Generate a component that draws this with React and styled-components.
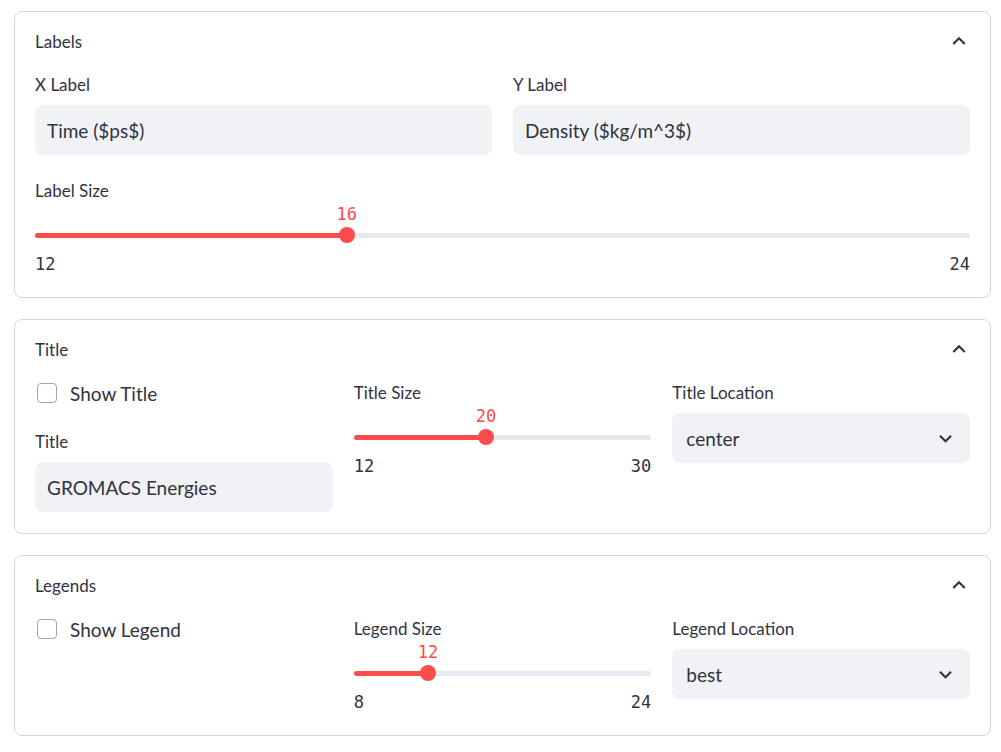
import React from 'react';
import styled, { createGlobalStyle } from 'styled-components';

const GlobalStyle = createGlobalStyle`
  * { box-sizing: border-box; }
  body {
    margin: 0;
    background: #ffffff;
    font-family: Lato, "Noto Sans", sans-serif;
    color: #31333f;
  }
`;

const Page = styled.div`
  display: flex;
  flex-direction: column;
  gap: 21px;
  padding: 11px 10px 0 14px;
`;

const Expander = styled.section`
  border: 1px solid #d6d6d9;
  border-radius: 8px;
  background: #fff;
`;

const ExpanderHeader = styled.div`
  height: 58px;
  padding: 0 18px 0 20px;
  display: flex;
  align-items: center;
  justify-content: space-between;
  font-size: 17px;
`;

const ExpanderBody = styled.div`
  padding: 3px 20px 21px;
  display: flex;
  flex-direction: column;
  gap: 24px;
`;

const Grid = styled.div`
  display: grid;
  grid-template-columns: repeat(${p => p.$cols}, 1fr);
  column-gap: 21px;
  align-items: start;
`;

const Field = styled.div`
  display: flex;
  flex-direction: column;
`;

const Stack = styled.div`
  display: flex;
  flex-direction: column;
  gap: 25px;
`;

const Label = styled.label`
  font-size: 17px;
  line-height: 24px;
  margin-bottom: ${p => (p.$tight ? '1px' : '8px')};
`;

const TextBox = styled.input`
  height: 50px;
  width: 100%;
  border: none;
  outline: none;
  border-radius: 8px;
  background: #f0f2f6;
  padding: 0 12px;
  font-family: inherit;
  font-size: 19px;
  color: #31333f;
`;

const SelectBox = styled.div`
  height: 50px;
  border-radius: 8px;
  background: #f0f2f6;
  padding: 0 12px 0 14px;
  display: flex;
  align-items: center;
  justify-content: space-between;
  font-size: 19px;
`;

const CheckRow = styled.div`
  height: 24px;
  display: flex;
  align-items: center;
  gap: 13px;
  padding-left: 2px;
  font-size: 19px;
`;

const Box = styled.span`
  width: 20px;
  height: 20px;
  border: 1px solid #a3a4ab;
  border-radius: 4px;
  background: #fff;
`;

const SliderBox = styled.div`
  display: flex;
  flex-direction: column;
  font-family: "DejaVu Sans Mono", "Liberation Mono", monospace;
  font-size: 17px;
`;

const ValueRow = styled.div`
  position: relative;
  height: 20px;
`;

const ValueText = styled.span`
  position: absolute;
  top: 0;
  line-height: 20px;
  transform: translateX(-50%);
  color: #ff4b4b;
`;

const TrackRow = styled.div`
  height: 22px;
  display: flex;
  align-items: center;
`;

const Track = styled.div`
  position: relative;
  width: 100%;
  height: 5px;
  border-radius: 3px;
  background: #e6e9ef;
`;

const Fill = styled.div`
  position: absolute;
  left: 0;
  top: 0;
  bottom: 0;
  border-radius: 3px;
  background: #ff4b4b;
`;

const Thumb = styled.div`
  position: absolute;
  top: 50%;
  width: 16px;
  height: 16px;
  border-radius: 50%;
  background: #ff4b4b;
  transform: translate(-50%, -50%);
`;

const Ticks = styled.div`
  margin-top: 6px;
  height: 24px;
  line-height: 24px;
  display: flex;
  justify-content: space-between;
`;

const Chevron = ({ up, size = 25 }) => (
  <svg width={size} height={size} viewBox="0 0 24 24" fill="#31333f">
    {up
      ? <path d="M12 8l-6 6 1.41 1.41L12 10.83l4.59 4.58L18 14z" />
      : <path d="M16.59 8.59L12 13.17 7.41 8.59 6 10l6 6 6-6z" />}
  </svg>
);

const Panel = ({ title, children }) => (
  <Expander>
    <ExpanderHeader>
      <span>{title}</span>
      <Chevron up size={26} />
    </ExpanderHeader>
    <ExpanderBody>{children}</ExpanderBody>
  </Expander>
);

const Slider = ({ min, max, value }) => {
  const pct = ((value - min) / (max - min)) * 100;
  return (
    <SliderBox>
      <ValueRow>
        <ValueText style={{ left: `${pct}%` }}>{value}</ValueText>
      </ValueRow>
      <TrackRow>
        <Track>
          <Fill style={{ width: `${pct}%` }} />
          <Thumb style={{ left: `${pct}%` }} />
        </Track>
      </TrackRow>
      <Ticks>
        <span>{min}</span>
        <span>{max}</span>
      </Ticks>
    </SliderBox>
  );
};

const TextField = ({ label, value }) => (
  <Field>
    <Label>{label}</Label>
    <TextBox readOnly defaultValue={value} />
  </Field>
);

const SliderField = ({ label, ...rest }) => (
  <Field>
    <Label $tight>{label}</Label>
    <Slider {...rest} />
  </Field>
);

const SelectField = ({ label, value }) => (
  <Field>
    <Label>{label}</Label>
    <SelectBox>
      <span>{value}</span>
      <Chevron />
    </SelectBox>
  </Field>
);

const Checkbox = ({ label }) => (
  <CheckRow>
    <Box />
    <span>{label}</span>
  </CheckRow>
);

export default function App() {
  return (
    <>
      <GlobalStyle />
      <Page>
        <Panel title="Labels">
          <Grid $cols={2}>
            <TextField label="X Label" value="Time ($ps$)" />
            <TextField label="Y Label" value="Density ($kg/m^3$)" />
          </Grid>
          <SliderField label="Label Size" min={12} max={24} value={16} />
        </Panel>

        <Panel title="Title">
          <Grid $cols={3}>
            <Stack>
              <Checkbox label="Show Title" />
              <TextField label="Title" value="GROMACS Energies" />
            </Stack>
            <SliderField label="Title Size" min={12} max={30} value={20} />
            <SelectField label="Title Location" value="center" />
          </Grid>
        </Panel>

        <Panel title="Legends">
          <Grid $cols={3}>
            <Checkbox label="Show Legend" />
            <SliderField label="Legend Size" min={8} max={24} value={12} />
            <SelectField label="Legend Location" value="best" />
          </Grid>
        </Panel>
      </Page>
    </>
  );
}
